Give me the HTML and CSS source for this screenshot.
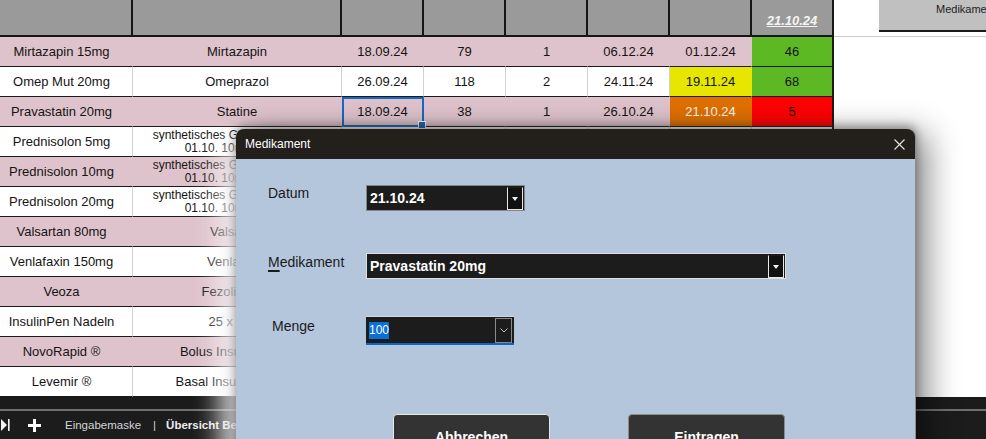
FILE: index.html
```html
<!DOCTYPE html>
<html lang="de">
<head>
<meta charset="utf-8">
<title>Medikamente</title>
<link rel="stylesheet" href="styles.css">
</head>
<body>
<div class="screen">
  <div class="top">
    <div class="sheet">
      <div class="row head">
        <div class="c"></div><div class="c"></div><div class="c"></div><div class="c"></div>
        <div class="c"></div><div class="c"></div><div class="c"></div>
        <div class="c date"><span>21.10.24</span></div>
      </div>
      <div class="row r pink">
        <div class="c">Mirtazapin 15mg</div><div class="c">Mirtazapin</div><div class="c">18.09.24</div><div class="c">79</div>
        <div class="c">1</div><div class="c">06.12.24</div><div class="c">01.12.24</div><div class="c green">46</div>
      </div>
      <div class="row r">
        <div class="c">Omep Mut 20mg</div><div class="c">Omeprazol</div><div class="c">26.09.24</div><div class="c">118</div>
        <div class="c">2</div><div class="c">24.11.24</div><div class="c yellow">19.11.24</div><div class="c green">68</div>
      </div>
      <div class="row r pink">
        <div class="c">Pravastatin 20mg</div><div class="c">Statine</div><div class="c sel">18.09.24</div><div class="c">38</div>
        <div class="c">1</div><div class="c">26.10.24</div><div class="c orange">21.10.24</div><div class="c red">5</div>
      </div>
      <div class="row r">
        <div class="c">Prednisolon 5mg</div><div class="c two">synthetisches Glucocorticoid ab<br>01.10. 10mg täglich</div><div class="c"></div><div class="c"></div>
        <div class="c"></div><div class="c"></div><div class="c"></div><div class="c"></div>
      </div>
      <div class="row r pink">
        <div class="c">Prednisolon 10mg</div><div class="c two">synthetisches Glucocorticoid ab<br>01.10. 10mg täglich</div><div class="c"></div><div class="c"></div>
        <div class="c"></div><div class="c"></div><div class="c"></div><div class="c"></div>
      </div>
      <div class="row r">
        <div class="c">Prednisolon 20mg</div><div class="c two">synthetisches Glucocorticoid ab<br>01.10. 10mg täglich</div><div class="c"></div><div class="c"></div>
        <div class="c"></div><div class="c"></div><div class="c"></div><div class="c"></div>
      </div>
      <div class="row r pink">
        <div class="c">Valsartan 80mg</div><div class="c">Valsartan</div><div class="c"></div><div class="c"></div>
        <div class="c"></div><div class="c"></div><div class="c"></div><div class="c"></div>
      </div>
      <div class="row r">
        <div class="c">Venlafaxin 150mg</div><div class="c">Venlafaxin</div><div class="c"></div><div class="c"></div>
        <div class="c"></div><div class="c"></div><div class="c"></div><div class="c"></div>
      </div>
      <div class="row r pink">
        <div class="c">Veoza</div><div class="c">Fezolinetant</div><div class="c"></div><div class="c"></div>
        <div class="c"></div><div class="c"></div><div class="c"></div><div class="c"></div>
      </div>
      <div class="row r">
        <div class="c">InsulinPen Nadeln</div><div class="c">25 x 4mm</div><div class="c"></div><div class="c"></div>
        <div class="c"></div><div class="c"></div><div class="c"></div><div class="c"></div>
      </div>
      <div class="row r pink">
        <div class="c">NovoRapid ®</div><div class="c">Bolus Insulin Aspart</div><div class="c"></div><div class="c"></div>
        <div class="c"></div><div class="c"></div><div class="c"></div><div class="c"></div>
      </div>
      <div class="row r">
        <div class="c">Levemir ®</div><div class="c">Basal Insulin Detemir</div><div class="c"></div><div class="c"></div>
        <div class="c"></div><div class="c"></div><div class="c"></div><div class="c"></div>
      </div>
    </div>
    <div class="side">
      <div class="side-btn">Medikament eintragen</div>
    </div>
  </div>

  <div class="bottom">
    <div class="bottom-line"></div>
    <div class="tabs">
      <svg class="nav-last" width="9" height="12" viewBox="0 0 9 12"><path d="M0 0 L6 6 L0 12 Z" fill="#f2f2f2"/><rect x="7" y="0" width="1.6" height="12" fill="#f2f2f2"/></svg>
      <svg class="plus" width="13" height="13" viewBox="0 0 13 13"><rect x="5" y="0" width="3" height="13" fill="#ffffff"/><rect x="0" y="5" width="13" height="3" fill="#ffffff"/></svg>
      <span class="tab">Eingabemaske</span>
      <span class="sep">|</span>
      <span class="tab active">Übersicht Bestand</span>
    </div>
  </div>

  <div class="dialog">
    <div class="dlg-title">
      <span>Medikament</span>
      <svg class="close" width="11" height="11" viewBox="0 0 11 11"><path d="M0.5 0.5 L10.5 10.5 M10.5 0.5 L0.5 10.5" stroke="#e6e6e6" stroke-width="1.1"/></svg>
    </div>
    <div class="dlg-body">
      <div class="frow">
        <span class="lbl">Datum</span>
        <div class="combo c-datum"><span class="val">21.10.24</span><span class="drop"><i class="tri"></i></span></div>
      </div>
      <div class="frow f-med">
        <span class="lbl lbl-med"><u>M</u>edikament</span>
        <div class="combo c-med"><span class="val">Pravastatin 20mg</span><span class="drop"><i class="tri"></i></span></div>
      </div>
      <div class="frow f-menge">
        <span class="lbl lbl-menge">Menge</span>
        <div class="combo c-menge"><span class="val"><span class="hl">100</span></span><span class="drop drop-soft"><svg width="8" height="5" viewBox="0 0 8 5"><path d="M0.5 0.5 L4 4 L7.5 0.5" stroke="#bdbdbd" stroke-width="1" fill="none"/></svg></span></div>
      </div>
      <div class="buttons">
        <button class="btn btn-focus">Abbrechen</button>
        <button class="btn">Eintragen</button>
      </div>
    </div>
  </div>
</div>
</body>
</html>
```

FILE: styles.css
```css
* { box-sizing: border-box; margin: 0; padding: 0; }

html, body {
  width: 986px;
  height: 439px;
  overflow: hidden;
  background: #ffffff;
}

body {
  font-family: "Liberation Sans", Arial, sans-serif;
  color: #141414;
}

.screen {
  position: relative;
  width: 986px;
  height: 439px;
  display: flex;
  flex-direction: column;
  overflow: hidden;
}

.top {
  display: flex;
  align-items: flex-start;
  flex: none;
}

.sheet {
  width: 834px;
  flex: none;
}

.row {
  display: grid;
  grid-template-columns: 133px 209px repeat(6, 82px);
}

.head .c {
  height: 37px;
  background: #9a9a9a;
  border-right: 2px solid #161616;
  border-bottom: 2px solid #161616;
}

.head .date {
  display: flex;
  align-items: flex-end;
  justify-content: center;
  padding-bottom: 7px;
  font-size: 13px;
  font-weight: bold;
  font-style: italic;
  text-decoration: underline;
  color: #f4f4f4;
}

.r .c {
  height: 30px;
  background: #ffffff;
  border-bottom: 1px solid #1a1a1a;
  border-right: 1px solid #d2d2d2;
  font-size: 13px;
  line-height: 29px;
  text-align: center;
  white-space: nowrap;
  overflow: hidden;
}

.r .c:first-child { padding-right: 9px; }

.r.pink .c {
  background: #dfc3cc;
  border-right-color: #dfc3cc;
}

.r .c.two {
  font-size: 12px;
  line-height: 13px;
  padding-top: 2px;
}

.r .c.green { background: #5db923; border-right-color: #5db923; }
.r .c.yellow { background: #e6e600; border-right-color: #e6e600; }
.r .c.orange { background: #e07000; border-right-color: #e07000; color: #f6f6f6; }
.r .c.red { background: #ff0000; border-right-color: #ff0000; }

.r .c:last-child { border-right: 2px solid #1a1a1a; }

.r .c.sel {
  position: relative;
  overflow: visible;
  outline: 2px solid #1769c0;
  outline-offset: -2px;
}

.r .c.sel::after {
  content: "";
  position: absolute;
  right: -3px;
  bottom: -3px;
  width: 6px;
  height: 6px;
  background: #1769c0;
  border: 1px solid #ffffff;
}

.side {
  flex: 1;
  height: 37px;
  padding-left: 45px;
  border-bottom: 1px solid #cdcdcd;
}

.side-btn {
  height: 32px;
  background: #c0c0c0;
  border-bottom: 2px solid #1a1a1a;
  padding: 3px 0 0 57px;
  font-size: 11px;
  line-height: 13px;
  color: #222222;
  white-space: nowrap;
  overflow: hidden;
}

.bottom {
  flex: 1;
  background: #1c1c1c;
  display: flex;
  flex-direction: column;
}

.bottom-line {
  height: 14px;
  border-bottom: 2px solid #6f6f6f;
  background: #1b1b1b;
  flex: none;
}

.tabs {
  flex: 1;
  display: flex;
  align-items: center;
  padding-left: 1px;
  font-size: 11.5px;
  color: #d4d4d4;
  white-space: nowrap;
}

.nav-last { margin-right: 18px; }
.plus { margin-right: 24px; }
.sep { margin: 0 10px 0 12px; color: #cfcfcf; }
.tab.active { font-weight: bold; color: #eeeeee; }

/* dialog */
.dialog {
  position: absolute;
  left: 236px;
  top: 129px;
  width: 680px;
  height: 340px;
  background: #b4c6dc;
  border-radius: 8px 8px 0 0;
  border-right: 1px solid #8c8c8c;
  box-shadow:
    0 -3px 10px rgba(0, 0, 0, 0.35),
    12px 4px 32px rgba(0, 0, 0, 0.45),
    -22px 10px 26px -6px rgba(255, 255, 255, 0.85);
}

.dlg-title {
  height: 30px;
  background: #23201c;
  border-radius: 8px 8px 0 0;
  display: flex;
  align-items: center;
  justify-content: space-between;
  padding: 0 10px 0 9px;
  color: #ffffff;
  font-size: 12px;
}

.dlg-body {
  padding: 26px 0 0 32px;
}

.frow {
  display: flex;
  align-items: flex-start;
}

.lbl {
  width: 98px;
  flex: none;
  font-size: 14px;
  line-height: 16px;
  color: #1a1a1a;
}

.lbl-med { padding-top: 1px; }
.lbl-med u { text-decoration-thickness: 2px; text-underline-offset: 3px; }
.lbl-menge { padding: 2px 0 0 4px; }

.f-med { margin-top: 42px; }
.f-menge { margin-top: 37px; }

.combo {
  display: flex;
  align-items: stretch;
  background: #1c1c1c;
  color: #ffffff;
}

.combo .val {
  flex: 1;
  display: flex;
  align-items: center;
  padding-left: 3px;
  font-size: 14px;
  font-weight: bold;
}

.drop {
  width: 16px;
  flex: none;
  display: flex;
  align-items: center;
  justify-content: center;
  border: 1px solid #e8e8e8;
  border-top-color: #1c1c1c;
  background: #111111;
  margin: 1px 1px 0 0;
}

.tri {
  width: 0;
  height: 0;
  border-left: 3.5px solid transparent;
  border-right: 3.5px solid transparent;
  border-top: 4px solid #f0f0f0;
}

.c-datum {
  width: 159px;
  height: 26px;
  border: 1px solid #858585;
}

.c-med {
  width: 420px;
  height: 26px;
  border: 1px solid #dedede;
}

.c-menge {
  width: 148px;
  height: 29px;
  border-top: 1px solid #d6d6d6;
  border-bottom: 2px solid #0b66c6;
}

.c-menge .val {
  font-size: 12px;
  font-weight: normal;
}

.hl {
  background: #0a6fd6;
  color: #ffffff;
  padding: 1px 0 2px;
  line-height: 14px;
}

.drop-soft {
  width: 17px;
  border: 1px solid #8a8a8a;
  background: #1c1c1c;
  margin: 1px 2px 0 0;
}

.buttons {
  display: flex;
  gap: 78px;
  margin-top: 69px;
  padding-left: 125px;
}

.btn {
  width: 157px;
  height: 44px;
  background: #333333;
  color: #ffffff;
  border: 1px solid #8c8c8c;
  border-radius: 4px;
  font-family: "Liberation Sans", Arial, sans-serif;
  font-size: 14px;
  font-weight: bold;
  line-height: 16px;
  padding-bottom: 0;
  padding-top: 14px;
  display: flex;
  justify-content: center;
  align-items: flex-start;
}

.btn-focus { border-color: #e8e8e8; }
```
